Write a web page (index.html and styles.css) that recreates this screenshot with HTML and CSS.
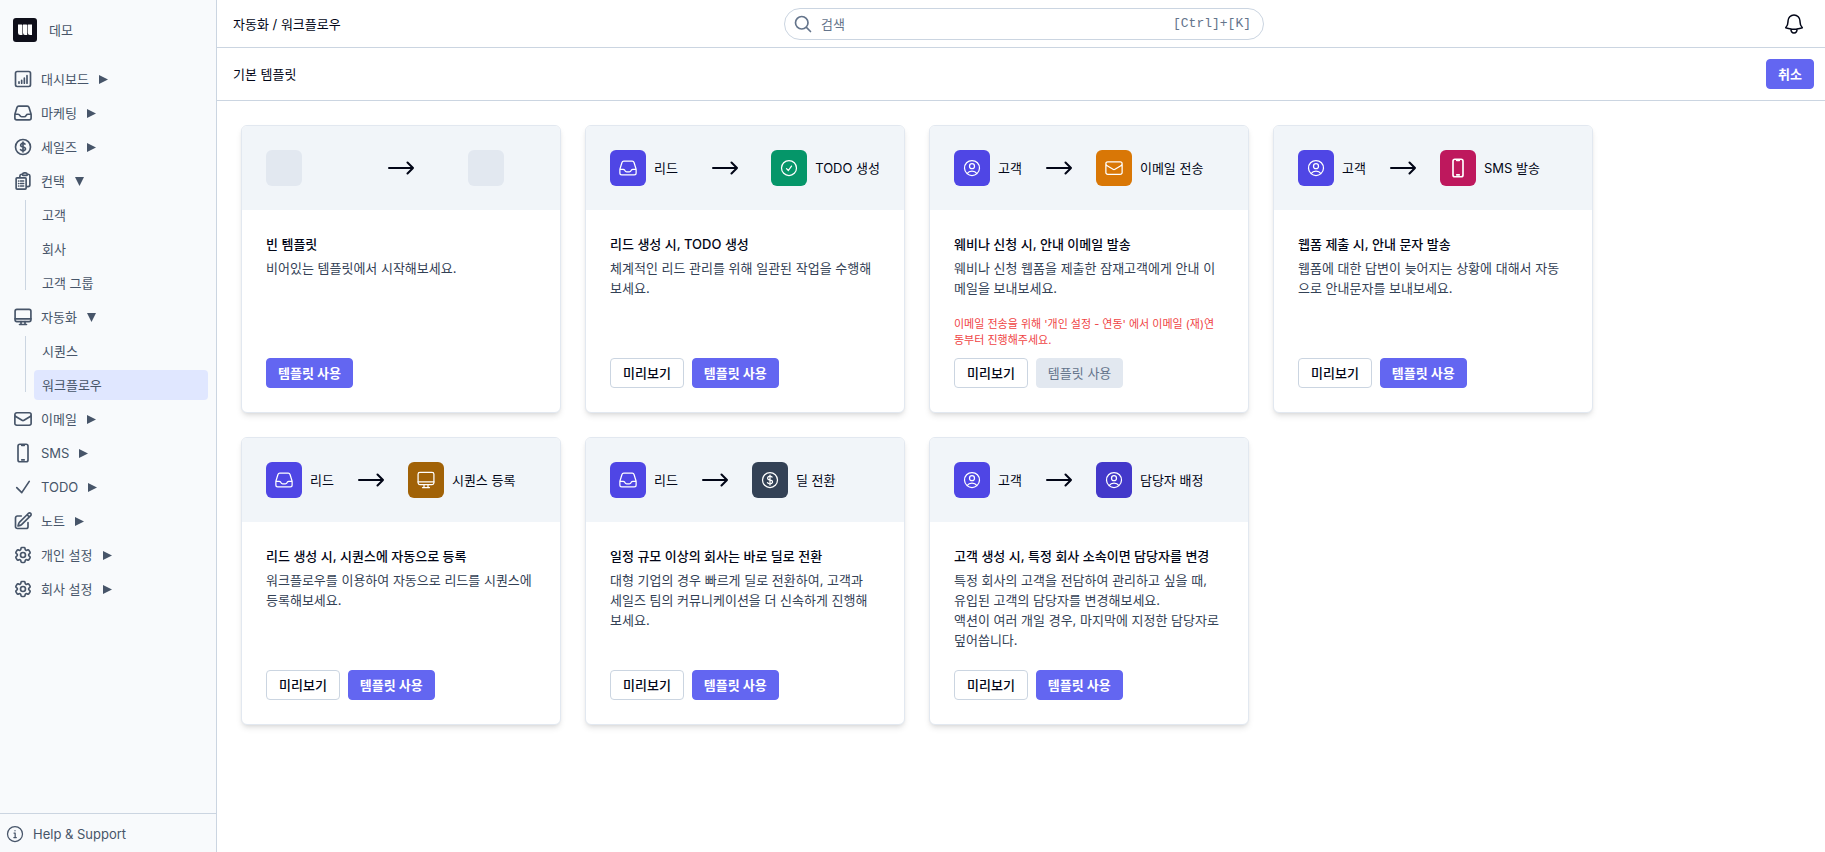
FILE: index.html
```html
<!DOCTYPE html>
<html lang="ko">
<head>
<meta charset="utf-8">
<meta name="viewport" content="width=device-width, initial-scale=1">
<title>워크플로우</title>
<link rel="stylesheet" href="styles.css">
</head>
<body>
<svg class="sprite" aria-hidden="true">
  <symbol id="chart" viewBox="0 0 24 24"><rect x="3" y="3" width="18" height="18" rx="2"/><path d="M7.2 17v-1.5M10.4 17v-3.5M13.6 17v-6M16.8 17V8"/></symbol>
  <symbol id="inbox" viewBox="0 0 24 24"><path d="M2.25 13.5h3.86a2.25 2.25 0 0 1 2.012 1.244l.256.512a2.25 2.25 0 0 0 2.013 1.244h3.218a2.25 2.25 0 0 0 2.013-1.244l.256-.512a2.25 2.25 0 0 1 2.013-1.244h3.859m-19.5.338V18a2.25 2.25 0 0 0 2.25 2.25h15A2.25 2.25 0 0 0 21.75 18v-4.162c0-.224-.034-.447-.1-.661L19.24 5.338a2.25 2.25 0 0 0-2.15-1.588H6.911a2.25 2.25 0 0 0-2.15 1.588L2.35 13.177a2.25 2.25 0 0 0-.1.661Z"/></symbol>
  <symbol id="dollar" viewBox="0 0 24 24"><path d="M12 6v12m-3-2.818.879.659c1.171.879 3.07.879 4.242 0 1.172-.879 1.172-2.303 0-3.182C13.536 12.219 12.768 12 12 12c-.725 0-1.45-.22-2.003-.659-1.106-.879-1.106-2.303 0-3.182s2.9-.879 4.006 0l.415.33M21 12a9 9 0 1 1-18 0 9 9 0 0 1 18 0Z"/></symbol>
  <symbol id="clipboard" viewBox="0 0 24 24"><path d="M9 12h3.75M9 15h3.75M9 18h3.75m3 .75H18a2.25 2.25 0 0 0 2.25-2.25V6.108c0-1.135-.845-2.098-1.976-2.192a48.424 48.424 0 0 0-1.123-.08m-5.801 0c-.065.21-.1.433-.1.664 0 .414.336.75.75.75h4.5a.75.75 0 0 0 .75-.75 2.25 2.25 0 0 0-.1-.664m-5.8 0A2.251 2.251 0 0 1 13.5 2.25H15c1.012 0 1.867.668 2.15 1.586m-5.8 0c-.376.023-.75.05-1.124.08C9.095 4.01 8.25 4.973 8.25 6.108V8.25m0 0H4.875c-.621 0-1.125.504-1.125 1.125v11.25c0 .621.504 1.125 1.125 1.125h9.75c.621 0 1.125-.504 1.125-1.125V9.375c0-.621-.504-1.125-1.125-1.125H8.25ZM6.75 12h.008v.008H6.75V12Zm0 3h.008v.008H6.75V15Zm0 3h.008v.008H6.75V18Z"/></symbol>
  <symbol id="monitor" viewBox="0 0 24 24"><rect x="2.5" y="2.8" width="19" height="14.7" rx="2.2"/><path d="M2.5 14.2h19M9.6 17.5v3.2M14.4 17.5v3.2M7.8 21h8.4"/></symbol>
  <symbol id="mail" viewBox="0 0 24 24"><path d="M21.75 6.75v10.5a2.25 2.25 0 0 1-2.25 2.25h-15a2.25 2.25 0 0 1-2.25-2.25V6.75m19.5 0A2.25 2.25 0 0 0 19.5 4.5h-15a2.25 2.25 0 0 0-2.25 2.25m19.5 0v.243a2.25 2.25 0 0 1-1.07 1.916l-7.5 4.615a2.25 2.25 0 0 1-2.36 0L3.32 8.91a2.25 2.25 0 0 1-1.07-1.916V6.75"/></symbol>
  <symbol id="phone" viewBox="0 0 24 24"><path d="M10.5 1.5H8.25A2.25 2.25 0 0 0 6 3.75v16.5a2.25 2.25 0 0 0 2.25 2.25h7.5A2.25 2.25 0 0 0 18 20.25V3.75a2.25 2.25 0 0 0-2.25-2.25H13.5m-3 0V3h3V1.5m-3 0h3m-3 18.75h3"/></symbol>
  <symbol id="check" viewBox="0 0 24 24"><path d="m4.500 12.750 6 6 9-13.500"/></symbol>
  <symbol id="check-circle" viewBox="0 0 24 24"><path d="M9 12.750 11.250 15 15 9.750M21 12a9 9 0 1 1-18 0 9 9 0 0 1 18 0Z"/></symbol>
  <symbol id="note" viewBox="0 0 24 24"><path d="m16.862 4.487 1.687-1.688a1.875 1.875 0 1 1 2.652 2.652L10.582 16.07a4.5 4.5 0 0 1-1.897 1.13L6 18l.8-2.685a4.5 4.5 0 0 1 1.13-1.897l8.932-8.931Zm0 0L19.5 7.125M18 14v4.75A2.25 2.25 0 0 1 15.75 21H5.25A2.25 2.25 0 0 1 3 18.75V8.25A2.25 2.25 0 0 1 5.25 6H10"/></symbol>
  <symbol id="cog" viewBox="0 0 24 24"><path d="M9.594 3.94c.09-.542.56-.94 1.11-.94h2.593c.55 0 1.02.398 1.11.94l.213 1.281c.063.374.313.686.645.87.074.04.147.083.22.127.325.196.72.257 1.075.124l1.217-.456a1.125 1.125 0 0 1 1.37.49l1.296 2.247a1.125 1.125 0 0 1-.26 1.431l-1.003.827c-.293.241-.438.613-.43.992a7.723 7.723 0 0 1 0 .255c-.008.378.137.75.43.991l1.004.827c.424.35.534.955.26 1.43l-1.298 2.247a1.125 1.125 0 0 1-1.369.491l-1.217-.456c-.355-.133-.75-.072-1.076.124a6.47 6.47 0 0 1-.22.128c-.331.183-.581.495-.644.869l-.213 1.281c-.09.543-.56.94-1.11.94h-2.594c-.55 0-1.019-.398-1.11-.94l-.213-1.281c-.062-.374-.312-.686-.644-.87a6.52 6.52 0 0 1-.22-.127c-.325-.196-.72-.257-1.076-.124l-1.217.456a1.125 1.125 0 0 1-1.369-.49l-1.297-2.247a1.125 1.125 0 0 1 .26-1.431l1.004-.827c.292-.24.437-.613.43-.991a6.932 6.932 0 0 1 0-.255c.007-.38-.138-.751-.43-.992l-1.004-.827a1.125 1.125 0 0 1-.26-1.43l1.297-2.247a1.125 1.125 0 0 1 1.37-.491l1.216.456c.356.133.751.072 1.076-.124.072-.044.146-.086.22-.128.332-.183.582-.495.644-.869l.214-1.28Z"/><path d="M15 12a3 3 0 1 1-6 0 3 3 0 0 1 6 0Z"/></symbol>
  <symbol id="info" viewBox="0 0 24 24"><circle cx="12" cy="12" r="9"/><path d="M10.800 10.800h1.400v5.200M10.600 16.200h3M12 7.800v.3"/></symbol>
  <symbol id="user" viewBox="0 0 24 24"><path d="M17.982 18.725A7.488 7.488 0 0 0 12 15.75a7.488 7.488 0 0 0-5.982 2.975m11.963 0a9 9 0 1 0-11.963 0m11.963 0A8.966 8.966 0 0 1 12 21a8.966 8.966 0 0 1-5.982-2.275M15 9.75a3 3 0 1 1-6 0 3 3 0 0 1 6 0Z"/></symbol>
  <symbol id="search" viewBox="0 0 24 24"><path d="m21 21-5.197-5.197m0 0A7.5 7.5 0 1 0 5.196 5.196a7.5 7.5 0 0 0 10.607 10.607Z"/></symbol>
  <symbol id="bell" viewBox="0 0 24 24"><path d="M14.857 17.082a23.848 23.848 0 0 0 5.454-1.31A8.967 8.967 0 0 1 18 9.75V9A6 6 0 0 0 6 9v.75a8.967 8.967 0 0 1-2.312 6.022c1.733.64 3.56 1.085 5.455 1.31m5.714 0a24.255 24.255 0 0 1-5.714 0m5.714 0a3 3 0 1 1-5.714 0"/></symbol>
  <symbol id="arrow" viewBox="0 0 26 14"><path d="M1 7h24M19.500 1.500 25 7l-5.500 5.500"/></symbol>
  <symbol id="caret" viewBox="0 0 8 8"><path d="M0 0v8l8-4Z"/></symbol>
  <symbol id="caret-down" viewBox="0 0 8 8"><path d="M0 0h8L4 8Z"/></symbol>
</svg>

<div class="app">
  <aside class="sidebar">
    <a class="brand" href="#">
      <svg class="brand__logo" viewBox="0 0 24 24" aria-hidden="true"><rect width="24" height="24" rx="3" fill="#0f0f1a"/><path d="M5 6.500h3.600q.8 0 .8.800V17H7.200Q5 17 5 14.800ZM10 6.500h3.400q.8 0 .8.800V17H12q-2 0-2-2.200ZM14.800 6.500H19V17h-2q-2.200 0-2.200-2.200Z" fill="#fff"/></svg>
      <span>데모</span>
    </a>
    <nav class="nav" aria-label="메뉴">
      <ul class="nav__list">
        <li><a class="nav__item" href="#"><svg class="icon"><use href="#chart"/></svg>대시보드<svg class="caret"><use href="#caret"/></svg></a></li>
        <li><a class="nav__item" href="#"><svg class="icon"><use href="#inbox"/></svg>마케팅<svg class="caret"><use href="#caret"/></svg></a></li>
        <li><a class="nav__item" href="#"><svg class="icon"><use href="#dollar"/></svg>세일즈<svg class="caret"><use href="#caret"/></svg></a></li>
        <li>
          <a class="nav__item" href="#"><svg class="icon"><use href="#clipboard"/></svg>컨택<svg class="caret"><use href="#caret-down"/></svg></a>
          <ul class="nav__sub">
            <li><a class="nav__subitem" href="#">고객</a></li>
            <li><a class="nav__subitem" href="#">회사</a></li>
            <li><a class="nav__subitem" href="#">고객 그룹</a></li>
          </ul>
        </li>
        <li>
          <a class="nav__item" href="#"><svg class="icon"><use href="#monitor"/></svg>자동화<svg class="caret"><use href="#caret-down"/></svg></a>
          <ul class="nav__sub">
            <li><a class="nav__subitem" href="#">시퀀스</a></li>
            <li><a class="nav__subitem nav__subitem--active" href="#" aria-current="page">워크플로우</a></li>
          </ul>
        </li>
        <li><a class="nav__item" href="#"><svg class="icon"><use href="#mail"/></svg>이메일<svg class="caret"><use href="#caret"/></svg></a></li>
        <li><a class="nav__item" href="#"><svg class="icon"><use href="#phone"/></svg>SMS<svg class="caret"><use href="#caret"/></svg></a></li>
        <li><a class="nav__item" href="#"><svg class="icon"><use href="#check"/></svg>TODO<svg class="caret"><use href="#caret"/></svg></a></li>
        <li><a class="nav__item" href="#"><svg class="icon"><use href="#note"/></svg>노트<svg class="caret"><use href="#caret"/></svg></a></li>
        <li><a class="nav__item" href="#"><svg class="icon"><use href="#cog"/></svg>개인 설정<svg class="caret"><use href="#caret"/></svg></a></li>
        <li><a class="nav__item" href="#"><svg class="icon"><use href="#cog"/></svg>회사 설정<svg class="caret"><use href="#caret"/></svg></a></li>
      </ul>
    </nav>
    <a class="help" href="#"><svg class="icon icon--thin"><use href="#info"/></svg>Help &amp; Support</a>
  </aside>

  <div class="content">
    <header class="topbar">
      <div class="topbar__path">자동화 / 워크플로우</div>
      <label class="search">
        <svg class="icon"><use href="#search"/></svg>
        <input class="search__input" type="text" placeholder="검색" aria-label="검색">
        <span class="search__keys">[Ctrl]+[K]</span>
      </label>
      <button class="topbar__bell" type="button" aria-label="알림"><svg class="icon icon--large"><use href="#bell"/></svg></button>
    </header>
    <div class="subbar">
      <h1 class="subbar__title">기본 템플릿</h1>
      <button class="button button--primary" type="button">취소</button>
    </div>

    <main class="cards">
      <article class="card">
        <div class="flow flow--spread">
          <div class="step step--blank"><span class="tile tile--blank"></span></div>
          <svg class="arrow"><use href="#arrow"/></svg>
          <div class="step step--blank"><span class="tile tile--blank"></span></div>
        </div>
        <div class="card__body">
          <h2 class="card__title">빈 템플릿</h2>
          <p class="card__text">비어있는 템플릿에서 시작해보세요.</p>
          <div class="card__actions">
            <button class="button button--primary" type="button">템플릿 사용</button>
          </div>
        </div>
      </article>

      <article class="card">
        <div class="flow flow--spread">
          <div class="step"><span class="tile tile--indigo"><svg class="icon icon--thin"><use href="#inbox"/></svg></span>리드</div>
          <svg class="arrow"><use href="#arrow"/></svg>
          <div class="step"><span class="tile tile--green"><svg class="icon icon--thin"><use href="#check-circle"/></svg></span>TODO 생성</div>
        </div>
        <div class="card__body">
          <h2 class="card__title">리드 생성 시, TODO 생성</h2>
          <p class="card__text">체계적인 리드 관리를 위해 일관된 작업을 수행해보세요.</p>
          <div class="card__actions">
            <button class="button" type="button">미리보기</button>
            <button class="button button--primary" type="button">템플릿 사용</button>
          </div>
        </div>
      </article>

      <article class="card">
        <div class="flow">
          <div class="step"><span class="tile tile--indigo"><svg class="icon icon--thin"><use href="#user"/></svg></span>고객</div>
          <svg class="arrow"><use href="#arrow"/></svg>
          <div class="step"><span class="tile tile--amber"><svg class="icon icon--thin"><use href="#mail"/></svg></span>이메일 전송</div>
        </div>
        <div class="card__body">
          <h2 class="card__title">웨비나 신청 시, 안내 이메일 발송</h2>
          <p class="card__text">웨비나 신청 웹폼을 제출한 잠재고객에게 안내 이메일을 보내보세요.</p>
          <p class="card__warning">이메일 전송을 위해 '개인 설정 - 연동' 에서 이메일 (재)연동부터 진행해주세요.</p>
          <div class="card__actions">
            <button class="button" type="button">미리보기</button>
            <button class="button button--primary" type="button" disabled>템플릿 사용</button>
          </div>
        </div>
      </article>

      <article class="card">
        <div class="flow">
          <div class="step"><span class="tile tile--indigo"><svg class="icon icon--thin"><use href="#user"/></svg></span>고객</div>
          <svg class="arrow"><use href="#arrow"/></svg>
          <div class="step"><span class="tile tile--pink"><svg class="icon"><use href="#phone"/></svg></span>SMS 발송</div>
        </div>
        <div class="card__body">
          <h2 class="card__title">웹폼 제출 시, 안내 문자 발송</h2>
          <p class="card__text">웹폼에 대한 답변이 늦어지는 상황에 대해서 자동으로 안내문자를 보내보세요.</p>
          <div class="card__actions">
            <button class="button" type="button">미리보기</button>
            <button class="button button--primary" type="button">템플릿 사용</button>
          </div>
        </div>
      </article>

      <article class="card">
        <div class="flow">
          <div class="step"><span class="tile tile--indigo"><svg class="icon icon--thin"><use href="#inbox"/></svg></span>리드</div>
          <svg class="arrow"><use href="#arrow"/></svg>
          <div class="step"><span class="tile tile--brown"><svg class="icon icon--thin"><use href="#monitor"/></svg></span>시퀀스 등록</div>
        </div>
        <div class="card__body">
          <h2 class="card__title">리드 생성 시, 시퀀스에 자동으로 등록</h2>
          <p class="card__text">워크플로우를 이용하여 자동으로 리드를 시퀀스에 등록해보세요.</p>
          <div class="card__actions">
            <button class="button" type="button">미리보기</button>
            <button class="button button--primary" type="button">템플릿 사용</button>
          </div>
        </div>
      </article>

      <article class="card">
        <div class="flow">
          <div class="step"><span class="tile tile--indigo"><svg class="icon icon--thin"><use href="#inbox"/></svg></span>리드</div>
          <svg class="arrow"><use href="#arrow"/></svg>
          <div class="step"><span class="tile tile--slate"><svg class="icon icon--thin"><use href="#dollar"/></svg></span>딜 전환</div>
        </div>
        <div class="card__body">
          <h2 class="card__title">일정 규모 이상의 회사는 바로 딜로 전환</h2>
          <p class="card__text">대형 기업의 경우 빠르게 딜로 전환하여, 고객과 세일즈 팀의 커뮤니케이션을 더 신속하게 진행해보세요.</p>
          <div class="card__actions">
            <button class="button" type="button">미리보기</button>
            <button class="button button--primary" type="button">템플릿 사용</button>
          </div>
        </div>
      </article>

      <article class="card">
        <div class="flow">
          <div class="step"><span class="tile tile--indigo"><svg class="icon icon--thin"><use href="#user"/></svg></span>고객</div>
          <svg class="arrow"><use href="#arrow"/></svg>
          <div class="step"><span class="tile tile--violet"><svg class="icon icon--thin"><use href="#user"/></svg></span>담당자 배정</div>
        </div>
        <div class="card__body">
          <h2 class="card__title">고객 생성 시, 특정 회사 소속이면 담당자를 변경</h2>
          <p class="card__text">특정 회사의 고객을 전담하여 관리하고 싶을 때, 유입된 고객의 담당자를 변경해보세요.<br>액션이 여러 개일 경우, 마지막에 지정한 담당자로 덮어씁니다.</p>
          <div class="card__actions">
            <button class="button" type="button">미리보기</button>
            <button class="button button--primary" type="button">템플릿 사용</button>
          </div>
        </div>
      </article>
    </main>
  </div>
</div>
</body>
</html>
```
FILE: styles.css
```css
*,
*::before,
*::after {
  box-sizing: border-box;
}

body {
  margin: 0;
  color: #020617;
  background: #fff;
  font-family: Inter, "Noto Sans CJK KR", sans-serif;
  font-size: 13px;
  line-height: 20px;
}

h1, h2, p, ul {
  margin: 0;
  padding: 0;
}

ul {
  list-style: none;
}

a {
  color: inherit;
  text-decoration: none;
}

button, input {
  font: inherit;
  color: inherit;
}

.sprite {
  display: none;
}

.icon {
  flex: none;
  width: 20px;
  height: 20px;
  fill: none;
  stroke: currentColor;
  stroke-width: 2;
  stroke-linecap: round;
  stroke-linejoin: round;
}

.icon--thin {
  stroke-width: 1.5;
}

.icon--large {
  width: 24px;
  height: 24px;
  stroke-width: 1.5;
}

.app {
  display: flex;
  min-height: 100vh;
}

/* Sidebar */

.sidebar {
  display: flex;
  flex: none;
  flex-direction: column;
  width: 217px;
  border-right: 1px solid #cbd5e1;
  background: #f8fafc;
  color: #475569;
}

.brand {
  display: flex;
  align-items: center;
  gap: 12px;
  padding: 18px 13px 22px;
}

.brand__logo {
  width: 24px;
  height: 24px;
}

.nav {
  flex: 1;
}

.nav__list,
.nav__sub {
  display: flex;
  flex-direction: column;
  gap: 4px;
}

.nav__item {
  display: flex;
  align-items: center;
  gap: 8px;
  height: 30px;
  padding: 0 8px 0 13px;
}

.caret {
  flex: none;
  width: 9px;
  height: 9px;
  margin-left: 2px;
  fill: currentColor;
}

.nav__sub {
  margin-top: 4px;
  padding: 0 8px 0 34px;
  background: linear-gradient(#cbd5e1, #cbd5e1) 25px 0 / 1px calc(100% - 8px) no-repeat;
}

.nav__subitem {
  display: block;
  padding: 5px 8px;
  border-radius: 4px;
}

.nav__subitem--active {
  background: #e0e7ff;
}

.help {
  display: flex;
  align-items: center;
  gap: 8px;
  padding: 10px 5px 8px;
  border-top: 1px solid #cbd5e1;
}

/* Top bars */

.content {
  flex: 1;
  min-width: 0;
}

.topbar {
  display: grid;
  grid-template-columns: 1fr minmax(240px, 480px) 1fr;
  align-items: center;
  height: 48px;
  padding: 0 10px 0 16px;
  border-bottom: 1px solid #cbd5e1;
}

.search {
  display: flex;
  align-items: center;
  gap: 8px;
  height: 32px;
  padding: 0 12px 0 8px;
  border: 1px solid #cbd5e1;
  border-radius: 16px;
  color: #64748b;
}

.search__input {
  flex: 1;
  min-width: 0;
  padding: 0;
  border: 0;
  outline: 0;
  background: none;
}

.search__input::placeholder {
  color: #64748b;
  opacity: 1;
}

.search__keys {
  font-family: "Liberation Mono", monospace;
}

.topbar__bell {
  display: grid;
  place-items: center;
  justify-self: end;
  width: 42px;
  height: 40px;
  padding: 0;
  border: 0;
  background: none;
}

.subbar {
  display: flex;
  align-items: center;
  justify-content: space-between;
  padding: 11px 11px 11px 16px;
  border-bottom: 1px solid #cbd5e1;
}

.subbar__title {
  font-size: 13px;
  font-weight: 400;
}

.button {
  height: 30px;
  padding: 0 12px;
  border: 1px solid #cbd5e1;
  border-radius: 4px;
  background: #fff;
  font-weight: 500;
}

.button--primary {
  padding: 0 11px;
  border-color: #6366f1;
  background: #6366f1;
  color: #fff;
  font-weight: 700;
}

.button:disabled {
  border-color: #e2e8f0;
  background: #e2e8f0;
  color: #64748b;
  font-weight: 400;
}

/* Template cards */

.cards {
  display: grid;
  grid-template-columns: repeat(auto-fill, 320px);
  gap: 24px;
  padding: 24px;
}

.card {
  display: flex;
  flex-direction: column;
  min-height: 288px;
  overflow: hidden;
  border: 1px solid #e2e8f0;
  border-radius: 6px;
  background: #fff;
  box-shadow: 0 4px 6px -1px rgb(0 0 0 / 10%), 0 2px 4px -2px rgb(0 0 0 / 10%);
}

.flow {
  display: flex;
  align-items: center;
  gap: 24px;
  padding: 24px;
  background: #f1f5f9;
}

.flow--spread {
  justify-content: space-between;
}

.step {
  display: flex;
  align-items: center;
  gap: 8px;
  white-space: nowrap;
}

.step--blank {
  width: 68px;
}

.tile {
  display: grid;
  place-items: center;
  width: 36px;
  height: 36px;
  border-radius: 6px;
  color: #fff;
}

.tile--blank { background: #e2e8f0; }
.tile--indigo { background: #4f46e5; }
.tile--violet { background: #4338ca; }
.tile--green { background: #059669; }
.tile--amber { background: #d97706; }
.tile--pink { background: #be185d; }
.tile--brown { background: #a16207; }
.tile--slate { background: #334155; }

.arrow {
  flex: none;
  width: 26px;
  height: 14px;
  fill: none;
  stroke: currentColor;
  stroke-width: 2;
  stroke-linecap: round;
  stroke-linejoin: round;
}

.card__body {
  display: flex;
  flex: 1;
  flex-direction: column;
  padding: 24px;
}

.card__title {
  font-size: 13px;
  font-weight: 500;
}

.card__text {
  margin-top: 4px;
  padding-right: 3px;
  color: #334155;
}

.card__warning {
  margin: auto 0 10px;
  color: #ef4444;
  font-size: 11px;
  line-height: 16px;
}

.card__actions {
  display: flex;
  gap: 8px;
  margin-top: auto;
}

.card__warning + .card__actions {
  margin-top: 0;
}
```
